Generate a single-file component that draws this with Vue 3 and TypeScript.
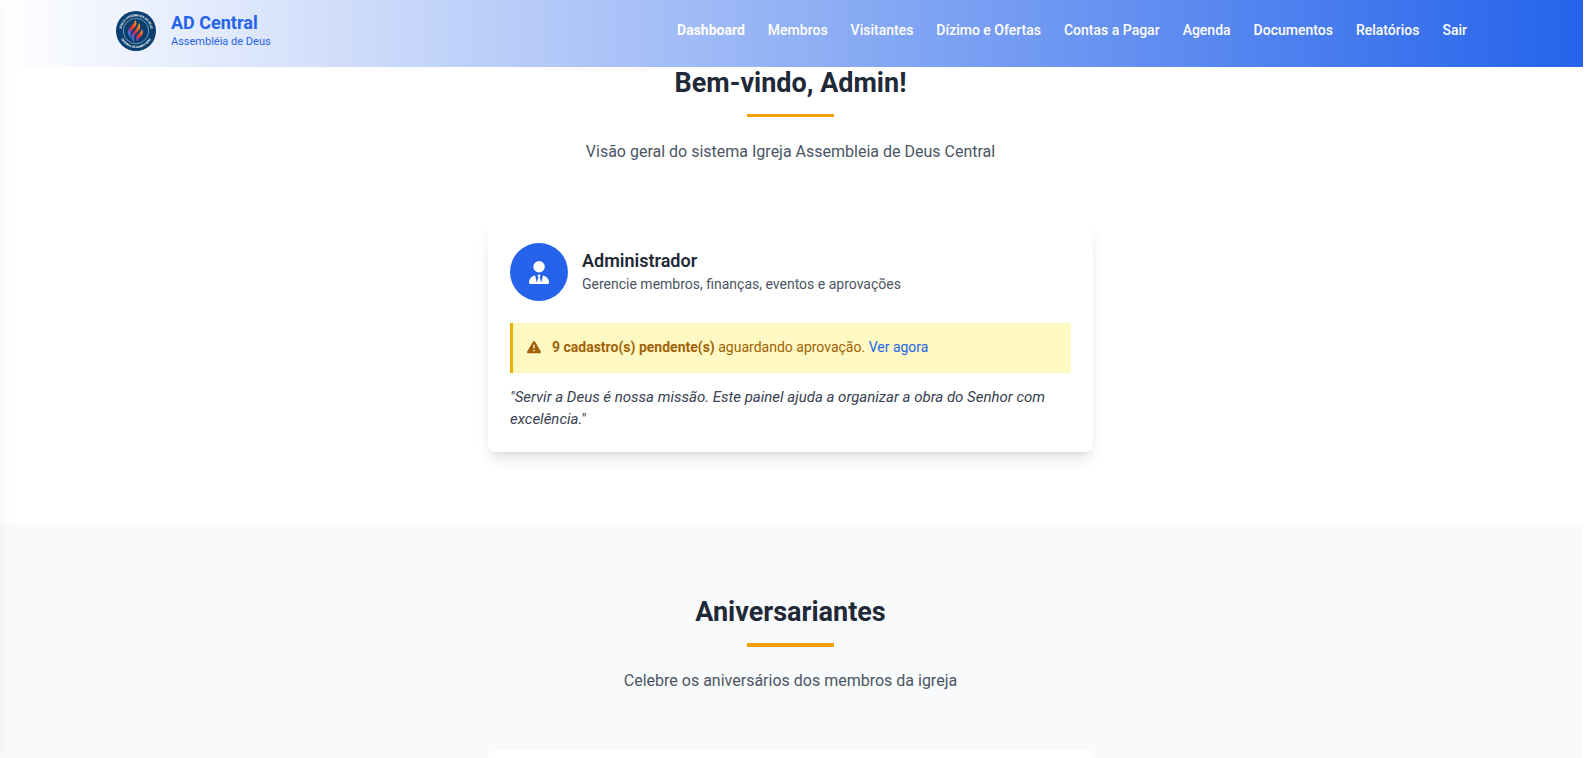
<script setup lang="ts">
interface NavItem {
  label: string
  active?: boolean
}

const navItems: NavItem[] = [
  { label: 'Dashboard', active: true },
  { label: 'Membros' },
  { label: 'Visitantes' },
  { label: 'Dízimo e Ofertas' },
  { label: 'Contas a Pagar' },
  { label: 'Agenda' },
  { label: 'Documentos' },
  { label: 'Relatórios' },
  { label: 'Sair' },
]

const pendingCount = 9
</script>

<template>
  <div class="page">
    <header class="header">
      <a class="brand" href="#">
        <svg class="logo" viewBox="0 0 120 120" aria-hidden="true">
          <defs>
            <linearGradient id="flame" gradientUnits="userSpaceOnUse" x1="38" y1="78" x2="78" y2="46">
              <stop offset="0" stop-color="#16a3f0" />
              <stop offset="0.3" stop-color="#8a3fae" />
              <stop offset="0.5" stop-color="#f0322d" />
              <stop offset="1" stop-color="#ffb01b" />
            </linearGradient>
            <path id="arc-top" d="M16.7 67.6A44 44 0 1 1 103.3 67.6" />
            <path id="arc-bottom" d="M9 60A51 51 0 0 0 111 60" />
          </defs>
          <circle cx="60" cy="60" r="60" fill="#093e6e" />
          <circle cx="60" cy="60" r="38" fill="none" stroke="#a9c0d3" stroke-width="2" />
          <text class="seal-text"><textPath href="#arc-top" startOffset="50%">IGREJA ASSEMBLEIA DE DEUS</textPath></text>
          <text class="seal-text"><textPath href="#arc-bottom" startOffset="50%">CENTRAL DE CAMPO BOM</textPath></text>
          <g fill="url(#flame)">
            <path d="M57 26C65 36 61 44 53 53C45 61 41 69 47 81C35 74 32 62 40 52C48 42 56 38 57 26Z" />
            <path d="M69 36C76 47 71 56 63 64C55 72 51 80 56 93C45 85 44 74 51 65C59 56 67 48 69 36Z" />
            <path d="M77 54C84 63 80 71 74 77C68 83 65 86 64 92C58 84 60 76 67 70C73 64 77 61 77 54Z" />
          </g>
        </svg>
        <span class="brand-text">
          <span class="brand-name">AD Central</span>
          <span class="brand-sub">Assembléia de Deus</span>
        </span>
      </a>
      <nav class="nav">
        <a
          v-for="item in navItems"
          :key="item.label"
          href="#"
          :class="['nav-link', { active: item.active }]"
          >{{ item.label }}</a
        >
      </nav>
    </header>

    <main class="main">
      <section class="section welcome">
        <h1 class="title">Bem-vindo, Admin!</h1>
        <div class="rule"></div>
        <p class="subtitle">Visão geral do sistema Igreja Assembleia de Deus Central</p>

        <article class="card">
          <div class="profile">
            <div class="avatar">
              <svg viewBox="0 0 448 512" aria-hidden="true">
                <path
                  d="M224 256A128 128 0 1 0 224 0a128 128 0 1 0 0 256zM209.1 359.2l-18.6-31c-6.4-10.7 1.3-24.2 13.7-24.2H224h19.7c12.4 0 20.1 13.6 13.7 24.2l-18.6 31 33.4 123.9 39.5-161.2c77.2 12 136.3 78.8 136.3 159.4c0 17-13.8 30.7-30.7 30.7H265.1 182.9 30.7C13.8 512 0 498.2 0 481.3c0-80.6 59.1-147.4 136.3-159.4l39.5 161.2 33.4-123.9z"
                />
              </svg>
            </div>
            <div class="profile-text">
              <h2 class="profile-name">Administrador</h2>
              <p class="profile-desc">Gerencie membros, finanças, eventos e aprovações</p>
            </div>
          </div>

          <div class="alert" role="alert">
            <svg class="alert-icon" viewBox="0 0 512 512" aria-hidden="true">
              <path
                d="M256 32c14.2 0 27.3 7.5 34.5 19.8l216 368c7.3 12.4 7.3 27.7 .2 40.1S486.3 480 472 480H40c-14.3 0-27.6-7.7-34.7-20.1s-7-27.8 .2-40.1l216-368C228.7 39.5 241.8 32 256 32zm0 128c-13.3 0-24 10.7-24 24V296c0 13.3 10.7 24 24 24s24-10.7 24-24V184c0-13.3-10.7-24-24-24zm32 224a32 32 0 1 0 -64 0 32 32 0 1 0 64 0z"
              />
            </svg>
            <p>
              <strong>{{ pendingCount }} cadastro(s) pendente(s)</strong> aguardando aprovação.
              <a class="alert-link" href="#">Ver agora</a>
            </p>
          </div>

          <p class="quote">
            "Servir a Deus é nossa missão. Este painel ajuda a organizar a obra do Senhor com
            excelência."
          </p>
        </article>
      </section>

      <section class="section birthdays">
        <h2 class="title">Aniversariantes</h2>
        <div class="rule thick"></div>
        <p class="subtitle">Celebre os aniversários dos membros da igreja</p>
        <article class="card"></article>
      </section>
    </main>
    <div class="edge" aria-hidden="true"></div>
  </div>
</template>

<style>
html,
body {
  height: 100%;
  overflow: hidden;
  background: #fff;
}
</style>

<style scoped>
.page {
  height: 100vh;
  padding-right: 2px;
  box-sizing: border-box;
  overflow: hidden;
  font-family: Roboto, 'Liberation Sans', sans-serif;
  font-size: 14px;
  line-height: 22px;
  color: #1f2937;
}

h1,
h2,
p {
  margin: 0;
}

a {
  text-decoration: none;
}

.header {
  display: flex;
  align-items: center;
  justify-content: space-between;
  height: 67px;
  padding: 0 116px 6px;
  box-sizing: border-box;
  background: linear-gradient(to right, #fff, #2563eb);
}

.brand {
  display: flex;
  align-items: center;
  gap: 15px;
  color: #2563eb;
}

.logo {
  width: 40px;
  height: 40px;
}

.seal-text {
  font-size: 9px;
  font-weight: 700;
  fill: #fff;
  text-anchor: middle;
}

.brand-text {
  display: flex;
  flex-direction: column;
}

.brand-name {
  font-size: 18px;
  font-weight: 700;
  line-height: 22px;
}

.brand-sub {
  font-size: 11px;
  line-height: 16px;
}

.nav {
  display: flex;
  gap: 23px;
  padding-bottom: 2px;
}

.nav-link {
  color: #fff;
  font-weight: 500;
}

.nav-link.active {
  font-weight: 700;
}

.section {
  display: flex;
  flex-direction: column;
  align-items: center;
  padding: 72px 24px 72px 22px;
}

.section.welcome {
  padding-top: 0;
}

.birthdays {
  background: #f9fafb;
}

.title {
  font-size: 27px;
  font-weight: 700;
  line-height: 32px;
}

.rule {
  width: 87px;
  height: 3px;
  margin: 15px 0 22px;
  background: #f59e0b;
}

.rule.thick {
  height: 4px;
  margin-bottom: 21px;
}

.subtitle {
  margin-bottom: 57px;
  color: #4b5563;
  font-size: 16px;
  line-height: 25px;
  text-align: center;
}

.card {
  width: 100%;
  max-width: 605px;
  box-sizing: border-box;
  padding: 22px;
  border-radius: 7px;
  background: #fff;
  box-shadow:
    0 10px 15px -3px rgb(0 0 0 / 10%),
    0 4px 6px -4px rgb(0 0 0 / 10%);
}

.profile {
  display: flex;
  align-items: center;
  gap: 14px;
  margin-bottom: 22px;
}

.profile-text {
  padding-bottom: 2px;
}

.avatar {
  display: flex;
  align-items: center;
  justify-content: center;
  width: 58px;
  height: 58px;
  border-radius: 50%;
  background: #2563eb;
}

.avatar svg {
  height: 23px;
  fill: #fff;
}

.profile-name {
  font-size: 18px;
  font-weight: 600;
  line-height: 25px;
}

.profile-desc {
  color: #4b5563;
}

.alert {
  display: flex;
  align-items: center;
  gap: 11px;
  margin-bottom: 13px;
  padding: 13px 14px 15px;
  border-left: 3px solid #eab308;
  background: #fef9c3;
  color: #a16207;
}

.alert-icon {
  width: 14px;
  height: 14px;
  fill: #a16207;
}

.alert-link {
  color: #2563eb;
}

.quote {
  color: #374151;
  font-size: 15px;
  font-style: italic;
}

.edge {
  position: fixed;
  top: 0;
  bottom: 0;
  left: -10px;
  width: 10px;
  box-shadow: 0 0 14px rgb(0 0 0 / 5%);
}
</style>
